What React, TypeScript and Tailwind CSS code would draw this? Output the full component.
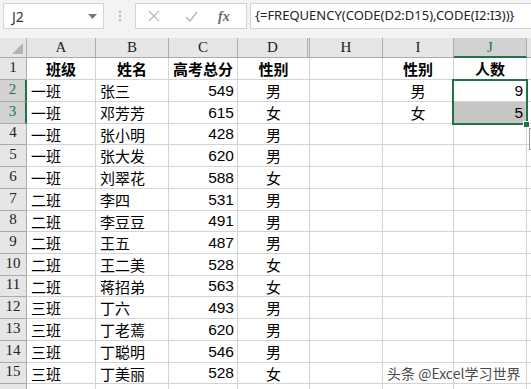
import React from 'react';

const cols = [
  { key: 'A', w: 'w-[69px]' },
  { key: 'B', w: 'w-[73px]' },
  { key: 'C', w: 'w-[69px]' },
  { key: 'D', w: 'w-[72px]' },
  { key: 'H', w: 'w-[73px]' },
  { key: 'I', w: 'w-[71px]' },
  { key: 'J', w: 'w-[73px]' },
];

type Row = { n: number; h: string; cells: string[] };

const data: [string, string, string, string, string, string][] = [
  ['班级', '姓名', '高考总分', '性别', '性别', '人数'],
  ['一班', '张三', '549', '男', '男', '9'],
  ['一班', '邓芳芳', '615', '女', '女', '5'],
  ['一班', '张小明', '428', '男', '', ''],
  ['一班', '张大发', '620', '男', '', ''],
  ['一班', '刘翠花', '588', '女', '', ''],
  ['二班', '李四', '531', '男', '', ''],
  ['二班', '李豆豆', '491', '男', '', ''],
  ['二班', '王五', '487', '男', '', ''],
  ['二班', '王二美', '528', '女', '', ''],
  ['二班', '蒋招弟', '563', '女', '', ''],
  ['三班', '丁六', '493', '男', '', ''],
  ['三班', '丁老蔫', '620', '男', '', ''],
  ['三班', '丁聪明', '546', '男', '', ''],
  ['三班', '丁美丽', '528', '女', '', ''],
];

const heights = ['h-[22px]', 'h-[22px]', 'h-[22px]', 'h-[21px]', 'h-[22px]', 'h-[22px]', 'h-[22px]', 'h-[21px]', 'h-[22px]', 'h-[22px]', 'h-[21px]', 'h-[22px]', 'h-[22px]', 'h-[22px]', 'h-[21px]'];

const rows: Row[] = data.map((r, i) => ({
  n: i + 1,
  h: heights[i],
  cells: [r[0], r[1], r[2], r[3], '', r[4], r[5]],
}));

const cjk = "font-['Noto_Sans_CJK_SC','Noto_Sans',sans-serif]";
const hdr = "font-['Liberation_Serif',serif]";

function FormulaBar() {
  return (
    <div className="flex h-[38px] items-start bg-[#f3f3f3] pt-[3px]">
      <div className="ml-[3px] flex h-[26px] w-[101px] items-center justify-between border border-[#d4d4d4] bg-white pl-[8px] pr-[6px]">
        <span className="font-['Noto_Sans',sans-serif] text-[14px] text-[#333]">J2</span>
        <svg width="9" height="5" viewBox="0 0 9 5"><path d="M0 0h9L4.5 5z" fill="#777" /></svg>
      </div>
      <div className="flex h-[26px] w-[31px] flex-col items-center justify-center gap-[2px]">
        <span className="h-[2px] w-[2px] bg-[#b5b5b5]" />
        <span className="h-[2px] w-[2px] bg-[#b5b5b5]" />
        <span className="h-[2px] w-[2px] bg-[#b5b5b5]" />
      </div>
      <div className="flex h-[26px] w-[112px] items-center border border-[#d4d4d4] bg-white">
        <svg className="ml-[12px]" width="12" height="12" viewBox="0 0 12 12"><path d="M1 1l10 10M11 1L1 11" stroke="#b8b8b8" strokeWidth="1.3" /></svg>
        <svg className="ml-[25px]" width="13" height="11" viewBox="0 0 13 11"><path d="M1 6l4 4 7-9" stroke="#b8b8b8" strokeWidth="1.5" fill="none" /></svg>
        <span className="ml-[20px] font-['Liberation_Serif',serif] text-[14px] font-bold italic text-[#6a6a6a]">fx</span>
      </div>
      <div className="ml-[3px] flex h-[26px] flex-1 items-center overflow-hidden whitespace-nowrap border border-r-0 border-[#d4d4d4] bg-white pl-[4px]">
        <span className="font-['Noto_Sans',sans-serif] text-[13px] text-[#222]">{'{=FREQUENCY(CODE(D2:D15),CODE(I2:I3))}'}</span>
      </div>
    </div>
  );
}

function HeaderRow() {
  return (
    <div className="flex h-[20px]">
      <div className="relative w-[27px] shrink-0 border-r border-b border-[#ababab] bg-[#e6e6e6]">
        <svg className="absolute bottom-[3px] right-[3px]" width="11" height="11" viewBox="0 0 11 11"><path d="M11 0v11H0z" fill="#b4b4b4" /></svg>
      </div>
      {cols.map((c) => {
        const sel = c.key === 'J';
        return (
          <div
            key={c.key}
            className={`${c.w} flex shrink-0 items-center justify-center border-r ${hdr} text-[15px] ${
              sel
                ? 'border-b-2 border-r-[#ababab] border-b-[#217346] bg-[#d2d2d2] text-[#217346]'
                : 'border-b border-[#ababab] bg-[#e6e6e6] text-[#222]'
            } ${c.key === 'D' ? 'border-r-[3px] border-double' : ''}`}
          >
            {c.key}
          </div>
        );
      })}
      <div className="flex-1 border-b border-[#ababab] bg-[#e6e6e6]" />
    </div>
  );
}

function Cell({ col, text, bold, j3 }: { col: number; text: string; bold: boolean; j3: boolean }) {
  const num = /^\d+$/.test(text);
  const align = bold || col === 3 || col === 5 ? 'justify-center' : num ? 'justify-end pr-[3px]' : 'justify-start pl-[4px]';
  return (
    <div
      className={`${cols[col].w} flex shrink-0 items-center border-r border-b border-[#d4d4d4] ${align} ${
        num ? "font-['Liberation_Sans',sans-serif] text-[15.5px]" : `${cjk} text-[15px]`
      } ${bold ? 'font-bold' : ''} ${j3 ? 'bg-[#c6c6c6]' : 'bg-white'} leading-none text-black`}
    >
      {text}
    </div>
  );
}

export default function App() {
  return (
    <div className="relative h-[389px] w-[531px] overflow-hidden bg-white">
      <FormulaBar />
      <HeaderRow />
      {rows.map((r) => {
        const sel = r.n === 2 || r.n === 3;
        return (
          <div key={r.n} className={`flex ${r.h}`}>
            <div
              className={`flex w-[27px] shrink-0 items-end justify-center pb-[1px] ${hdr} text-[15px] border-b border-[#ababab] ${
                sel ? 'border-r-2 border-r-[#217346] bg-[#d2d2d2] text-[#217346]' : 'border-r border-r-[#ababab] bg-[#e6e6e6] text-[#222]'
              }`}
            >
              {r.n}
            </div>
            {r.cells.map((t, i) => (
              <Cell key={i} col={i} text={t} bold={r.n === 1} j3={r.n === 3 && i === 6} />
            ))}
            <div className="flex-1 border-b border-[#d4d4d4]" />
          </div>
        );
      })}
      <div className="flex h-[10px]">
        <div className="w-[27px] shrink-0 border-r border-[#ababab] bg-[#e6e6e6]" />
        {cols.map((c) => (
          <div key={c.key} className={`${c.w} shrink-0 border-r border-[#d4d4d4]`} />
        ))}
      </div>

      {/* selection J2:J3 */}
      <div className="pointer-events-none absolute left-[452px] top-[79px] h-[46px] w-[76px] border-2 border-[#217346]" />
      <div className="absolute left-[523px] top-[121px] h-[7px] w-[7px] border border-white bg-[#217346]" />
      <div className="absolute left-[529px] top-[128px] h-[22px] w-[20px] border border-[#9a9a9a] bg-white" />

      <div className="absolute left-[387px] top-[363px] font-['Noto_Sans_CJK_SC',sans-serif] text-[14px] text-[#4a4a4a] [text-shadow:0_0_2px_#fff]">
        头条 @Excel学习世界
      </div>
    </div>
  );
}
